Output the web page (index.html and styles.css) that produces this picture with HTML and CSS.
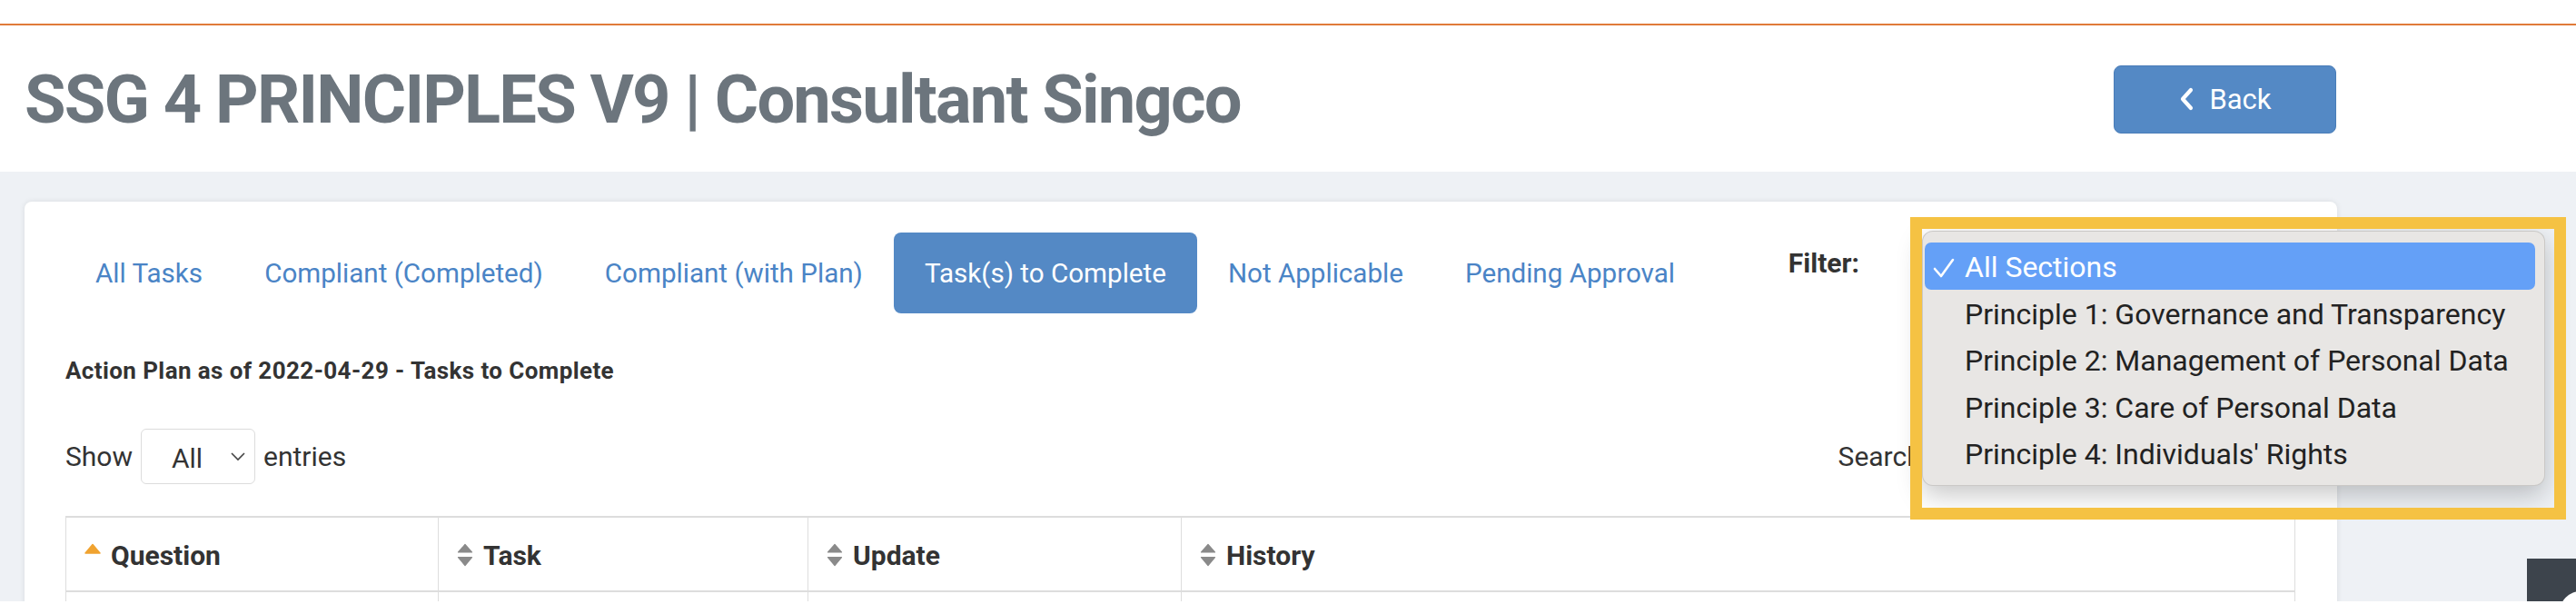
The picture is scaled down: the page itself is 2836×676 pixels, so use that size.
FILE: index.html
```html
<!DOCTYPE html>
<html lang="en">
<head>
<meta charset="utf-8">
<title>SSG 4 PRINCIPLES V9 | Consultant Singco</title>
<link rel="stylesheet" href="styles.css">
</head>
<body>
  <div class="topbar"></div>
  <header class="page-header">
    <h1 class="page-title">SSG 4 PRINCIPLES V9 | Consultant Singco</h1>
    <a class="btn-back" href="#">
      <svg class="chev" width="18" height="26" viewBox="0 0 18 26"><polyline points="14,3 5,13 14,23" fill="none" stroke="#fff" stroke-width="4.2" stroke-linecap="round" stroke-linejoin="round"/></svg>
      <span>Back</span>
    </a>
  </header>

  <main class="main">
    <section class="card">
      <div class="toolbar">
        <nav class="tabs">
          <a class="tab" href="#">All Tasks</a>
          <a class="tab" href="#">Compliant (Completed)</a>
          <a class="tab" href="#">Compliant (with Plan)</a>
          <a class="tab active" href="#">Task(s) to Complete</a>
          <a class="tab" href="#">Not Applicable</a>
          <a class="tab" href="#">Pending Approval</a>
        </nav>
        <div class="filter">
          <span class="filter-label">Filter:</span>
          <span class="filter-select"></span>
        </div>
      </div>

      <h2 class="plan-title">Action Plan as of 2022-04-29 - Tasks to Complete</h2>

      <div class="table-controls">
        <div class="length">
          <span>Show</span>
          <span class="select-sm">
            <span>All</span>
            <svg width="18" height="11" viewBox="0 0 18 11"><polyline points="2,2 9,9 16,2" fill="none" stroke="#444" stroke-width="1.6"/></svg>
          </span>
          <span>entries</span>
        </div>
        <div class="search">
          <span>Search:</span>
          <span class="search-input"></span>
        </div>
      </div>

      <table class="data-table">
        <colgroup>
          <col class="c1"><col class="c2"><col class="c3"><col class="c4">
        </colgroup>
        <thead>
          <tr>
            <th><svg class="sort" width="18" height="26" viewBox="0 0 18 26"><polygon points="1,11 9,1.5 17,11" fill="#f0a330" stroke="#f0a330" stroke-width="1.5" stroke-linejoin="round"/></svg>Question</th>
            <th><svg class="sort" width="18" height="26" viewBox="0 0 18 26"><polygon points="1.5,10 9,1.5 16.5,10" fill="#8a8a8a" stroke="#8a8a8a" stroke-width="1.2" stroke-linejoin="round"/><polygon points="1.5,15.5 16.5,15.5 9,24.5" fill="#8a8a8a" stroke="#8a8a8a" stroke-width="1.2" stroke-linejoin="round"/></svg>Task</th>
            <th><svg class="sort" width="18" height="26" viewBox="0 0 18 26"><polygon points="1.5,10 9,1.5 16.5,10" fill="#8a8a8a" stroke="#8a8a8a" stroke-width="1.2" stroke-linejoin="round"/><polygon points="1.5,15.5 16.5,15.5 9,24.5" fill="#8a8a8a" stroke="#8a8a8a" stroke-width="1.2" stroke-linejoin="round"/></svg>Update</th>
            <th><svg class="sort" width="18" height="26" viewBox="0 0 18 26"><polygon points="1.5,10 9,1.5 16.5,10" fill="#8a8a8a" stroke="#8a8a8a" stroke-width="1.2" stroke-linejoin="round"/><polygon points="1.5,15.5 16.5,15.5 9,24.5" fill="#8a8a8a" stroke="#8a8a8a" stroke-width="1.2" stroke-linejoin="round"/></svg>History</th>
          </tr>
        </thead>
        <tbody>
          <tr><td>&nbsp;</td><td>&nbsp;</td><td>&nbsp;</td><td>&nbsp;</td></tr>
        </tbody>
      </table>
    </section>

    <aside class="side-widget"><span class="widget-dot"></span></aside>
  </main>

  <div class="dropdown-popup">
    <div class="option selected">
      <svg class="check" width="24" height="22" viewBox="0 0 24 22"><polyline points="2,12 9,20 22,2" fill="none" stroke="#fff" stroke-width="2.6" stroke-linecap="round" stroke-linejoin="round"/></svg>
      All Sections
    </div>
    <div class="option">Principle 1: Governance and Transparency</div>
    <div class="option">Principle 2: Management of Personal Data</div>
    <div class="option">Principle 3: Care of Personal Data</div>
    <div class="option">Principle 4: Individuals' Rights</div>
  </div>

  <div class="highlight-box"></div>
</body>
</html>
```

FILE: styles.css
```css
* { box-sizing: border-box; }

html, body {
  margin: 0;
  padding: 0;
  background: #ffffff;
  font-family: Roboto, "Open Sans", "Liberation Sans", sans-serif;
  color: #333333;
}

body {
  width: 2836px;
  height: 676px;
  overflow: hidden;
}

.topbar {
  height: 28px;
  background: #ffffff;
  border-bottom: 2px solid #e07b39;
  box-shadow: 0 1px 0 #f7e2d2;
}

.page-header {
  height: 161px;
  display: flex;
  align-items: center;
  justify-content: space-between;
  padding: 0 264px 0 27px;
  background: #ffffff;
}

.page-title {
  margin: 0;
  padding-top: 3px;
  font-family: Roboto, "Open Sans", sans-serif;
  font-weight: 700;
  font-size: 74px;
  line-height: 88px;
  letter-spacing: -1.8px;
  color: #6c757d;
  white-space: nowrap;
}

.btn-back {
  width: 245px;
  height: 75px;
  display: flex;
  align-items: center;
  justify-content: center;
  gap: 16px;
  background: #5489c5;
  border: 1px solid #4a7db8;
  border-radius: 8px;
  color: #ffffff;
  text-decoration: none;
  font-size: 31px;
  margin-top: 1px;
}

.btn-back .chev { display: block; }

.main {
  position: relative;
  height: 473px;
  overflow: hidden;
  background: #eef1f5;
  padding: 33px 263px 0 27px;
}

.card {
  background: #ffffff;
  border-radius: 8px 8px 0 0;
  box-shadow: 0 0 6px rgba(0, 0, 0, 0.09);
  padding: 34px 46px 0 45px;
  height: 600px;
}

.toolbar {
  display: flex;
  align-items: flex-start;
}

.tabs {
  display: flex;
  margin-left: -1px;
}

.tab {
  display: block;
  padding: 28px 34px 27px;
  font-size: 29.6px;
  line-height: 34px;
  color: #4a84c6;
  text-decoration: none;
  border-radius: 8px;
  white-space: nowrap;
}

.tab.active {
  background: #5489c5;
  color: #ffffff;
}

.filter {
  margin-left: auto;
  display: flex;
  align-items: flex-start;
  gap: 68px;
  margin-top: 16px;
}

.filter-label {
  font-weight: 700;
  font-size: 30px;
  line-height: 36px;
  color: #333333;
}

.filter-select {
  width: 412px;
  height: 50px;
  border: 1px solid #dddddd;
  border-radius: 6px;
}

.plan-title {
  margin: 49px 0 0;
  font-size: 26px;
  line-height: 28px;
  letter-spacing: 0.4px;
  font-weight: 700;
  color: #333333;
}

.table-controls {
  margin-top: 50px;
  display: flex;
  align-items: center;
  justify-content: space-between;
  font-size: 30px;
  line-height: 36px;
  color: #333333;
}

.length {
  display: flex;
  align-items: center;
  gap: 9px;
}

.select-sm {
  width: 126px;
  height: 61px;
  display: flex;
  align-items: center;
  justify-content: space-between;
  padding: 4px 9px 0 33px;
  border: 1px solid #dcdcdc;
  border-radius: 6px;
}

.select-sm svg { margin-top: -4px; }

.search {
  display: flex;
  align-items: center;
  gap: 10px;
}

.search-input {
  width: 394px;
  height: 61px;
  border: 1px solid #dcdcdc;
  border-radius: 6px;
}

.data-table {
  margin-top: 35px;
  width: 100%;
  border-collapse: separate;
  border-spacing: 0;
  table-layout: fixed;
}

.data-table col.c1 { width: 410px; }
.data-table col.c2 { width: 407px; }
.data-table col.c3 { width: 411px; }

.data-table th {
  text-align: left;
  font-size: 30px;
  line-height: 36px;
  font-weight: 700;
  color: #333333;
  padding: 24px 10px 20px 20px;
  border-top: 2px solid #dddddd;
  border-bottom: 2px solid #dddddd;
  border-left: 1px solid #dddddd;
  white-space: nowrap;
}

.data-table th:last-child,
.data-table td:last-child { border-right: 1px solid #dddddd; }

.data-table td {
  border-left: 1px solid #dddddd;
  height: 80px;
  font-size: 24px;
}

.sort {
  vertical-align: -2px;
  margin-right: 11px;
}

.side-widget {
  position: absolute;
  right: 0;
  top: 426px;
  width: 54px;
  height: 47px;
  background: #3d444c;
  overflow: hidden;
}

.widget-dot {
  position: absolute;
  left: 36px;
  top: 36px;
  width: 46px;
  height: 46px;
  border-radius: 50%;
  background: #ffffff;
}

.dropdown-popup {
  position: absolute;
  left: 2116px;
  top: 254px;
  width: 686px;
  height: 281px;
  padding: 12px 0 13px;
  background: #e8e6e4;
  border: 1px solid rgba(0, 0, 0, 0.13);
  border-radius: 12px;
  box-shadow: 0 10px 28px rgba(0, 0, 0, 0.22);
  font-family: Roboto, "Noto Sans", sans-serif;
  font-size: 32px;
  color: #222222;
  z-index: 5;
}

.option {
  position: relative;
  height: 51.5px;
  line-height: 51px;
  margin: 0 10px 0 2px;
  padding: 2px 0 0 44px;
  border-radius: 7px;
  white-space: nowrap;
}

.option.selected {
  background: #64a0f7;
  color: #ffffff;
}

.check {
  position: absolute;
  left: 9px;
  top: 17px;
}

.highlight-box {
  position: absolute;
  left: 2103px;
  top: 239px;
  width: 722px;
  height: 333px;
  border: 13px solid #f5c243;
  z-index: 6;
}
```
